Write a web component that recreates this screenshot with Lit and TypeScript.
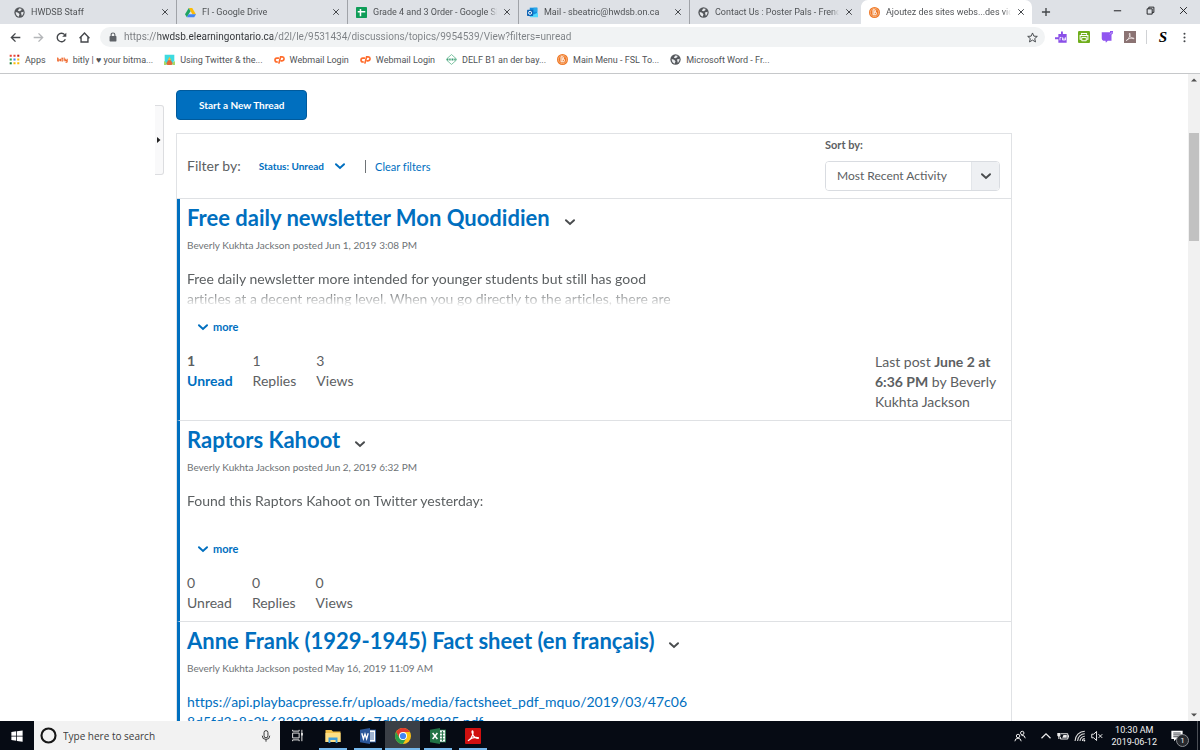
import { LitElement, html, css, svg, nothing, TemplateResult } from 'lit';
import { customElement, property } from 'lit/decorators.js';
import { classMap } from 'lit/directives/class-map.js';

interface Tab {
  icon: string;
  title: string;
  active?: boolean;
}

interface Thread {
  title: string;
  meta: string;
  text?: string;
  link?: string;
  unread: number;
  replies: number;
  views: number;
  lastPost?: { date: string; author: string };
}

const TABS: Tab[] = [
  { icon: 'globe', title: 'HWDSB Staff' },
  { icon: 'drive', title: 'FI - Google Drive' },
  { icon: 'sheets', title: 'Grade 4 and 3 Order - Google Sheets' },
  { icon: 'outlook', title: 'Mail - sbeatric@hwdsb.on.ca' },
  { icon: 'globe', title: 'Contact Us : Poster Pals - French' },
  { icon: 'fsl', title: 'Ajoutez des sites webs...des vidéos', active: true },
];

const BOOKMARKS = [
  { icon: 'apps', title: 'Apps' },
  { icon: 'bitly', title: 'bitly | ♥ your bitma...' },
  { icon: 'hive', title: 'Using Twitter & the...' },
  { icon: 'cpanel', title: 'Webmail Login' },
  { icon: 'cpanel', title: 'Webmail Login' },
  { icon: 'delf', title: 'DELF B1 an der bay...' },
  { icon: 'fsl', title: 'Main Menu - FSL To...' },
  { icon: 'globe', title: 'Microsoft Word - Fr...' },
];

const EXTENSIONS = [
  { icon: 'readwrite', title: 'Read&Write' },
  { icon: 'printer', title: 'Print' },
  { icon: 'note', title: 'Notes' },
  { icon: 'pdf', title: 'PDF' },
];

const TASKS = [
  { icon: 'folder', title: 'File Explorer' },
  { icon: 'word', title: 'Word' },
  { icon: 'chrome', title: 'Chrome', active: true },
  { icon: 'excel', title: 'Excel' },
  { icon: 'acrobat', title: 'Acrobat' },
];

const THREADS: Thread[] = [
  {
    title: 'Free daily newsletter Mon Quodidien',
    meta: 'Beverly Kukhta Jackson posted Jun 1, 2019 3:08 PM',
    text: 'Free daily newsletter more intended for younger students but still has good articles at a decent reading level. When you go directly to the articles, there are',
    unread: 1,
    replies: 1,
    views: 3,
    lastPost: { date: 'June 2 at 6:36 PM', author: 'Beverly Kukhta Jackson' },
  },
  {
    title: 'Raptors Kahoot',
    meta: 'Beverly Kukhta Jackson posted Jun 2, 2019 6:32 PM',
    text: 'Found this Raptors Kahoot on Twitter yesterday:',
    unread: 0,
    replies: 0,
    views: 0,
  },
  {
    title: 'Anne Frank (1929-1945) Fact sheet (en français)',
    meta: 'Beverly Kukhta Jackson posted May 16, 2019 11:09 AM',
    link: 'https://api.playbacpresse.fr/uploads/media/factsheet_pdf_mquo/2019/03/47c068d5fd3a8c2b6322391681b6a7d060f18335.pdf',
    unread: 0,
    replies: 0,
    views: 0,
  },
];

/** Icon bodies, all drawn on a 16x16 grid. */
const ICONS: Record<string, TemplateResult> = {
  globe: svg`
    <circle cx="8" cy="8" r="7.5" fill="#55585c" />
    <path d="M2.5 7.2 L6 8.2 L8 10.5 L6.8 14 Q2.4 12.6 2.5 7.2Z M7.5 2 L11 2.4 L10.6 4.6 L8 6.2 L5.6 5.6Z M10 8 L14 7 Q14 11 11.4 13 L10.8 10.4Z" fill="#e8eaed" />
  `,
  drive: svg`
    <path d="M5.5 1.5 H10.5 L16 11 H11Z" fill="#fbbc05" />
    <path d="M5.5 1.5 L8 6 L2.7 15 L0 10.6Z" fill="#1fa463" />
    <path d="M5.4 10.6 H16 L13.4 15 H2.7Z" fill="#4285f4" />
  `,
  sheets: svg`
    <rect x="0" y="0" width="16" height="16" rx="1" fill="#0f9d58" />
    <path d="M6.5 3 V13.5 M2.5 7 H13.5" fill="none" stroke="#fff" stroke-width="2.2" />
  `,
  outlook: svg`
    <path d="M4 1 H15 V14 H4Z" fill="#1490df" />
    <path d="M9.5 1 H15 V7 H9.5Z" fill="#28a8ea" />
    <path d="M5 8 L10 11 L16 8 V15 H5Z" fill="#50d9ff" />
    <rect x="0" y="4" width="9" height="9" rx="1" fill="#0f64b5" />
    <circle cx="4.5" cy="8.5" r="2.2" fill="none" stroke="#fff" stroke-width="1.4" />
  `,
  fsl: svg`
    <circle cx="8" cy="8" r="8" fill="#ee7623" />
    <circle cx="8" cy="8" r="6" fill="none" stroke="#ffd9b8" stroke-width="0.8" />
    <path d="M5.8 4 H8.6 Q10.6 4.4 9.4 7 Q12 8 10.2 11.4 H5.8Z M7.6 5 V11 M7.6 7.6 H10" fill="none" stroke="#fff" stroke-width="1.3" />
  `,
  apps: svg`
    <path d="M1 1h3v3h-3z M6.5 1h3v3h-3z" fill="#ea4335" />
    <path d="M12 1h3v3h-3z" fill="#c5221f" />
    <path d="M1 6.5h3v3h-3z" fill="#34a853" />
    <path d="M6.5 6.5h3v3h-3z" fill="#4285f4" />
    <path d="M12 6.5h3v3h-3z M12 12h3v3h-3z M6.5 12h3v3h-3z" fill="#fbbc05" />
    <path d="M1 12h3v3h-3z" fill="#188038" />
  `,
  bitly: svg`
    <path d="M1 5 V10 Q3.4 10.4 3.4 8.4 Q3.2 7 1 7.6 M5.2 7 V10.4 M7.4 5 V10.2 H8.6 M6.4 7 H8.8 M10.4 5 V10.4 M12 7 Q12 10 13 10 Q14.8 10 14.8 7 V11 Q14.6 12.4 12.4 12" fill="none" stroke="#ee6123" stroke-width="1.5" />
  `,
  hive: svg`
    <path d="M1 1 H15 V9 L12 15 H3 L1 11Z" fill="#3edbe0" />
    <path d="M8 4 L10.5 9 H5.5Z" fill="#f3b63a" />
    <path d="M3 14 L6 9 H10 L13 14 L11 16 H5Z" fill="#e06a3b" />
    <path d="M0 10 L3 12 L4 16 H0Z M16 10 L13 12 L12 16 H16Z" fill="#a6d96a" />
  `,
  cpanel: svg`
    <path d="M7.2 6 H4.2 Q1.4 6.2 1.4 9 Q1.6 11.6 4.4 11.6 H5.6" fill="none" stroke="#ff6c2c" stroke-width="2.4" />
    <path d="M7 14 L9.6 4.2 H12 Q14.8 4.4 14.6 7.2 Q14.2 10 11.2 10 H9.6" fill="none" stroke="#ff6c2c" stroke-width="2.4" />
  `,
  delf: svg`
    <path d="M8 0.8 L15 7 V9 L8 15.2 L1 9 V7Z" fill="#fff" stroke="#65b891" stroke-width="1.2" />
    <path d="M1.5 8 H14.5" stroke="#3c9d73" stroke-width="3" stroke-dasharray="1.6 0.8" />
  `,
  back: svg`<path d="M15 8 H2 M8 2 L2 8 L8 14" fill="none" stroke="currentColor" stroke-width="2" />`,
  forward: svg`<path d="M1 8 H14 M8 2 L14 8 L8 14" fill="none" stroke="currentColor" stroke-width="2" />`,
  reload: svg`
    <path d="M13.6 10.6 A6.2 6.2 0 1 1 12.6 3.8" fill="none" stroke="currentColor" stroke-width="2" />
    <path d="M15 1 V7 H9Z" fill="currentColor" />
  `,
  home: svg`<path d="M0.8 9 L8 1.6 L15.2 9 M3 7.5 V14.5 H13 V7.5" fill="none" stroke="currentColor" stroke-width="2" />`,
  lock: svg`
    <rect x="2.5" y="6.5" width="11" height="8.5" rx="1" fill="#5f6368" />
    <path d="M5 7 V4.4 Q5 1.6 8 1.6 Q11 1.6 11 4.4 V7" fill="none" stroke="#5f6368" stroke-width="1.8" />
  `,
  star: svg`<path d="M8 1.4 L10 6 L15 6.4 L11.2 9.6 L12.4 14.4 L8 11.8 L3.6 14.4 L4.8 9.6 L1 6.4 L6 6Z" fill="none" stroke="#44474b" stroke-width="1.4" />`,
  readwrite: svg`
    <path d="M4.5 4 H8 V0.5 H10.5 V4 H15.5 V15.5 H4.5 V11 H0 V8.4 H4.5Z" fill="#8a4fe8" />
    <path d="M6.6 12.4 V8.6 H8.6 M10 8.4 V12 H14 V8.4 M12 9 V12" fill="none" stroke="#fff" stroke-width="1.1" />
  `,
  printer: svg`
    <rect x="0" y="0" width="16" height="16" rx="1.5" fill="#6fae1c" />
    <path d="M4.6 5 V3.4 H11.4 V5 M4.4 11 H2.8 V6 H13.2 V11 H11.6" fill="none" stroke="#fff" stroke-width="1.4" />
    <path d="M5 8.6 H11 V13 H5Z" fill="none" stroke="#fff" stroke-width="1.3" />
  `,
  note: svg`
    <path d="M1 1.6 H12 V0 H16 V3 L14 5 V13 H9 L6.5 15.6 L6 13 H3 Q1 12 1 10Z" fill="#9056f0" />
    <path d="M12 4.5 L15 1.5" stroke="#e7dafc" stroke-width="0.9" />
  `,
  pdf: svg`
    <rect x="0" y="0" width="16" height="16" fill="#8b7373" />
    <path d="M3 12.8 Q6.4 11 7.8 6.4 Q8.6 3 7.4 2.8 Q6.2 3.4 8 7 Q9.6 10.4 13.2 10.4 Q14.2 9.4 11 9.2 Q6.6 9.4 3 12.8Z" fill="none" stroke="#f3eaea" stroke-width="1.1" />
  `,
  menu: svg`
    <circle cx="8" cy="2.6" r="1.5" fill="#44474b" />
    <circle cx="8" cy="8" r="1.5" fill="#44474b" />
    <circle cx="8" cy="13.4" r="1.5" fill="#44474b" />
  `,
  close: svg`<path d="M2.5 2.5 L13.5 13.5 M13.5 2.5 L2.5 13.5" stroke="currentColor" stroke-width="2" />`,
  closeThin: svg`<path d="M2 2 L14 14 M14 2 L2 14" stroke="currentColor" stroke-width="1.7" />`,
  plus: svg`<path d="M8 1.5 V14.5 M1.5 8 H14.5" stroke="currentColor" stroke-width="2.2" />`,
  minimize: svg`<path d="M1.5 8.5 H14.5" stroke="currentColor" stroke-width="1.8" />`,
  restore: svg`<path d="M2 5 H11 V14.4 H2Z M5 5 V2 H14 V11.4 H11" fill="none" stroke="currentColor" stroke-width="1.7" />`,
  chevron: svg`<path d="M2.6 5.6 L8 10.6 L13.4 5.6" fill="none" stroke="currentColor" stroke-width="2.6" stroke-linecap="round" />`,
  triUp: svg`<path d="M2 11 L8 5 L14 11Z" fill="currentColor" />`,
  triDown: svg`<path d="M2 5 L8 11 L14 5Z" fill="currentColor" />`,
  triRight: svg`<path d="M4 2 L11 8 L4 14Z" fill="currentColor" />`,
  windows: svg`<path d="M0.5 2.6 L7 1.7 V7.5 H0.5Z M8 1.5 L15.5 0.5 V7.5 H8Z M0.5 8.5 H7 V14.3 L0.5 13.4Z M8 8.5 H15.5 V15.5 L8 14.5Z" fill="#fff" />`,
  cortana: svg`<circle cx="8" cy="8" r="6.6" fill="none" stroke="#161616" stroke-width="2" />`,
  mic: svg`
    <rect x="5.4" y="0.8" width="5.2" height="9.6" rx="2.6" fill="none" stroke="#333" stroke-width="1.3" />
    <path d="M3 7.6 Q3 12.6 8 12.6 Q13 12.6 13 7.6 M8 12.6 V15.6" fill="none" stroke="#333" stroke-width="1.3" />
  `,
  taskview: svg`
    <path d="M2 5 H10 V11 H2Z M2 1 V2.6 H10 V1 M2 15 V13.4 H10 V15" fill="none" stroke="#e6e6e6" stroke-width="1.2" />
    <path d="M13.4 1 V15" stroke="#e6e6e6" stroke-width="1.2" />
    <path d="M12.4 5 H14.6 V8 H12.4Z" fill="#e6e6e6" />
  `,
  folder: svg`
    <path d="M0.5 2 H6.5 L8 3.6 H15.5 V14 H0.5Z" fill="#f2c14b" />
    <path d="M0.5 5 H15.5 V14 H0.5Z" fill="#fddf85" />
    <path d="M3.5 15 V9.4 H12.5 V15 H10.6 V12 H5.4 V15Z" fill="#3f9edb" />
  `,
  word: svg`
    <rect x="8" y="2" width="7.6" height="12" fill="#fff" stroke="#2b579a" stroke-width="0.8" />
    <path d="M9.5 5 H14 M9.5 7 H14 M9.5 9 H14 M9.5 11 H14" stroke="#2b579a" stroke-width="0.9" />
    <path d="M0 1.8 L10 0 V16 L0 14.2Z" fill="#2b579a" />
    <path d="M1.8 5.2 L3.4 10.8 L5 6 L6.6 10.8 L8.2 5.2" fill="none" stroke="#fff" stroke-width="1.3" />
  `,
  chrome: svg`
    <circle cx="8" cy="8" r="8" fill="#fbc116" />
    <path d="M8 4 H15 A8 8 0 0 0 1.1 4 L4.5 10 L8 8Z" fill="#e33b2e" />
    <path d="M1.1 4 A8 8 0 0 0 8 16 L11.4 10 L8 8 L4.5 10Z" fill="#2a9e4b" />
    <circle cx="8" cy="8" r="4" fill="#fff" />
    <circle cx="8" cy="8" r="3.1" fill="#4285f4" />
  `,
  excel: svg`
    <rect x="8" y="2" width="7.6" height="12" fill="#fff" stroke="#217346" stroke-width="0.8" />
    <path d="M10 5 H14.5 M10 8 H14.5 M10 11 H14.5 M12.4 3 V13" stroke="#217346" stroke-width="1" />
    <path d="M0 1.8 L10 0 V16 L0 14.2Z" fill="#217346" />
    <path d="M2.6 5 L7.4 11 M7.4 5 L2.6 11" stroke="#fff" stroke-width="1.5" />
  `,
  acrobat: svg`
    <rect x="0" y="0" width="16" height="16" rx="1" fill="#d0100f" />
    <path d="M3 12.8 Q6.4 11 7.8 6.4 Q8.6 3 7.4 2.8 Q6.2 3.4 8 7 Q9.6 10.4 13.2 10.4 Q14.2 9.4 11 9.2 Q6.6 9.4 3 12.8Z" fill="none" stroke="#fff" stroke-width="1.1" />
  `,
  people: svg`
    <circle cx="11" cy="4" r="2.3" fill="none" stroke="#eee" stroke-width="1.3" />
    <circle cx="5.4" cy="8" r="2.3" fill="none" stroke="#eee" stroke-width="1.3" />
    <path d="M1.2 15 Q1.4 11 5.4 11 Q9.2 11 9.6 15 M10 7.2 Q14.6 6.6 15 11" fill="none" stroke="#eee" stroke-width="1.3" />
  `,
  caretUp: svg`<path d="M2 11 L8 5 L14 11" fill="none" stroke="#eee" stroke-width="1.6" />`,
  battery: svg`
    <path d="M5 5 H14.4 V12 H4.6 V9" fill="none" stroke="#eee" stroke-width="1.3" />
    <path d="M8.6 6.6 H13 V10.4 H7Z M14.6 7 H16 V10 H14.6Z M0.4 4 H4.6 V7.6 L3.2 9 V12 H1.8 V9 L0.4 7.6Z" fill="#eee" />
  `,
  wifi: svg`
    <path d="M1.4 14.6 A13 13 0 0 1 14.4 1.6 M4.8 14.6 A9.6 9.6 0 0 1 14.4 5 M8 14.6 A6.4 6.4 0 0 1 14.4 8.2 M11.2 14.6 A3.2 3.2 0 0 1 14.4 11.4" fill="none" stroke="#ddd" stroke-width="1.4" />
    <circle cx="13.8" cy="14" r="1.2" fill="#eee" />
  `,
  muted: svg`
    <path d="M1 5.6 H3.6 L7.4 2 V14 L3.6 10.4 H1Z M10 5.6 L15 10.6 M15 5.6 L10 10.6" fill="none" stroke="#eee" stroke-width="1.3" />
  `,
  action: svg`
    <path d="M0.5 1 H15.5 V12 H7 L4 15 V12 H0.5Z" fill="#fff" />
    <path d="M3 4 H13 M3 6.5 H13 M3 9 H10" stroke="#0a0f18" stroke-width="1" />
  `,
};

@customElement('ui-icon')
export class UiIcon extends LitElement {
  static styles = css`
    :host {
      display: inline-flex;
      flex: none;
      width: 12px;
      height: 12px;
    }

    svg {
      width: 100%;
      height: 100%;
      display: block;
    }
  `;

  @property() name = '';

  render() {
    return html`<svg viewBox="0 0 16 16" aria-hidden="true">${ICONS[this.name] ?? nothing}</svg>`;
  }
}

@customElement('browser-chrome')
export class BrowserChrome extends LitElement {
  static styles = css`
    :host {
      display: block;
      font: 9px/14px Roboto, 'Noto Sans', sans-serif;
      color: #505356;
      background: #fff;
      border-bottom: 1px solid #c6c8ca;
    }

    button {
      display: inline-flex;
      align-items: center;
      justify-content: center;
      padding: 0;
      border: 0;
      background: none;
      color: #44474b;
      font: inherit;
    }

    ui-icon {
      width: 11px;
      height: 11px;
    }

    .tabs {
      display: flex;
      height: 24px;
      padding-left: 6px;
      background: #dee1e6;
    }

    .tab {
      display: flex;
      align-items: center;
      flex: 0 1 171px;
      min-width: 0;
      gap: 6px;
      padding: 0 7px 0 8px;
      box-sizing: border-box;
      border-right: 1px solid #a0a3a8;
      background-clip: padding-box;
    }

    .tab.last {
      border-color: transparent;
    }

    .tab.active {
      background: #fff;
      border: 0;
      border-radius: 7px 7px 0 0;
    }

    .tab-title {
      flex: 1;
      overflow: hidden;
      white-space: nowrap;
      mask-image: linear-gradient(to right, #000 calc(100% - 8px), transparent);
    }

    .tab-close ui-icon {
      width: 8px;
      height: 8px;
    }

    .new-tab {
      width: 28px;
    }

    .new-tab ui-icon {
      width: 10px;
      height: 10px;
    }

    .window {
      display: flex;
      margin-left: auto;
      padding-bottom: 4px;
    }

    .window button {
      width: 33px;
      color: #202124;
    }

    .window ui-icon {
      width: 9px;
      height: 9px;
    }

    .toolbar {
      display: flex;
      align-items: center;
      padding: 3px 10px 3px 4px;
    }

    .nav {
      width: 23px;
      height: 20px;
    }

    .nav[disabled] {
      color: #b4b6b9;
    }

    .address {
      display: flex;
      align-items: center;
      flex: 1;
      min-width: 0;
      gap: 6px;
      margin: 0 10px 0 4px;
      padding: 0 7px 0 8px;
      height: 20px;
      border-radius: 10px;
      background: #f1f3f4;
    }

    .lock {
      width: 10px;
      height: 10px;
    }

    /* the host part of the address is darker than the rest */
    .url {
      flex: 1;
      min-width: 0;
      padding: 0;
      border: 0;
      outline: 0;
      font: 10px/16px Roboto, 'Noto Sans', sans-serif;
      color: transparent;
      background: linear-gradient(to right, #76797d 34px, #2f3235 34px 149px, #7c8084 149px);
      background-clip: text;
      -webkit-background-clip: text;
    }

    .extensions {
      display: flex;
      align-items: center;
      gap: 11px;
    }

    .extensions ui-icon {
      width: 12px;
      height: 12px;
    }

    .profile {
      margin: 0 12px 0 10px;
      padding-left: 12px;
      border-left: 1px solid #d0d2d5;
      font: italic bold 15px/14px 'Liberation Serif', serif;
      color: #000;
    }

    .bookmarks {
      display: flex;
      align-items: center;
      gap: 11px;
      height: 23px;
      padding: 0 9px 4px;
      box-sizing: border-box;
    }

    .bookmark {
      display: flex;
      align-items: center;
      gap: 5px;
      color: inherit;
      text-decoration: none;
      white-space: nowrap;
    }
  `;

  render() {
    return html`
      <nav class="tabs" aria-label="Tabs">
        ${TABS.map(
          (tab, i) => html`
            <div
              class=${classMap({ tab: true, active: !!tab.active, last: !!TABS[i + 1]?.active })}
            >
              <ui-icon name=${tab.icon}></ui-icon>
              <span class="tab-title">${tab.title}</span>
              <button class="tab-close" aria-label="Close tab">
                <ui-icon name="close"></ui-icon>
              </button>
            </div>
          `
        )}
        <button class="new-tab" aria-label="New tab"><ui-icon name="plus"></ui-icon></button>
        <div class="window">
          <button aria-label="Minimize"><ui-icon name="minimize"></ui-icon></button>
          <button aria-label="Restore"><ui-icon name="restore"></ui-icon></button>
          <button aria-label="Close"><ui-icon name="closeThin"></ui-icon></button>
        </div>
      </nav>
      <div class="toolbar">
        <button class="nav" aria-label="Back"><ui-icon name="back"></ui-icon></button>
        <button class="nav" aria-label="Forward" disabled>
          <ui-icon name="forward"></ui-icon>
        </button>
        <button class="nav" aria-label="Reload"><ui-icon name="reload"></ui-icon></button>
        <button class="nav" aria-label="Home"><ui-icon name="home"></ui-icon></button>
        <div class="address">
          <ui-icon class="lock" name="lock"></ui-icon>
          <input
            class="url"
            aria-label="Address"
            value="https://hwdsb.elearningontario.ca/d2l/le/9531434/discussions/topics/9954539/View?filters=unread"
          />
          <button aria-label="Bookmark this page"><ui-icon name="star"></ui-icon></button>
        </div>
        <div class="extensions">
          ${EXTENSIONS.map(
            (ext) => html`
              <button aria-label=${ext.title}><ui-icon name=${ext.icon}></ui-icon></button>
            `
          )}
        </div>
        <button class="profile" aria-label="Profile">S</button>
        <button aria-label="Menu"><ui-icon name="menu"></ui-icon></button>
      </div>
      <nav class="bookmarks" aria-label="Bookmarks">
        ${BOOKMARKS.map(
          (mark) => html`
            <a class="bookmark" href="#">
              <ui-icon name=${mark.icon}></ui-icon>
              <span>${mark.title}</span>
            </a>
          `
        )}
      </nav>
    `;
  }
}

@customElement('discussion-thread')
export class DiscussionThread extends LitElement {
  static styles = css`
    :host {
      display: block;
      padding: 4px 15px 8px 7px;
      border-left: 3px solid #006fbf;
      border-bottom: 1px solid #dfe1e4;
      font-size: 14px;
      line-height: 20px;
    }

    h2 {
      display: flex;
      align-items: center;
      gap: 14px;
      margin: 0;
      font-size: 22px;
      line-height: 30px;
      font-weight: 700;
    }

    a {
      color: #006fbf;
      text-decoration: none;
    }

    button {
      display: inline-flex;
      align-items: center;
      padding: 0;
      border: 0;
      background: none;
      font: inherit;
      color: #494c4e;
    }

    .actions {
      padding-top: 8px;
    }

    .meta {
      margin: 4px 0 16px;
      font-size: 10px;
      line-height: 16px;
      color: #6e7376;
    }

    .body {
      max-width: 500px;
      height: 40px;
      margin: 0;
      overflow: hidden;
      mask-image: linear-gradient(to bottom, #000 20px, transparent 38px);
    }

    .body.link {
      mask-image: none;
      word-break: break-all;
    }

    .more {
      gap: 4px;
      margin: 8px 0 14px 10px;
      font-size: 11px;
      font-weight: 700;
      line-height: 20px;
      color: #006fbf;
    }

    .footer {
      display: flex;
      justify-content: space-between;
      align-items: flex-start;
    }

    .stats {
      display: flex;
      gap: 20px;
      margin: 0;
    }

    .stats div {
      display: flex;
      flex-direction: column-reverse;
    }

    .stats dd {
      margin: 0;
    }

    .has-unread {
      font-weight: 700;
    }

    .has-unread dt {
      color: #006fbf;
    }

    .last-post {
      width: 121px;
      margin: 0;
      padding-top: 1px;
    }
  `;

  @property({ attribute: false }) thread!: Thread;

  render() {
    const { title, meta, text, link, unread, replies, views, lastPost } = this.thread;

    return html`
      <h2>
        <a href="#">${title}</a>
        <button class="actions" aria-label="Actions for ${title}">
          <ui-icon name="chevron"></ui-icon>
        </button>
      </h2>
      <p class="meta">${meta}</p>
      <p class=${classMap({ body: true, link: !!link })}>
        ${link ? html`<a href=${link}>${link}</a>` : text}
      </p>
      <button class="more"><ui-icon name="chevron"></ui-icon>more</button>
      <div class="footer">
        <dl class="stats">
          <div class=${classMap({ 'has-unread': unread > 0 })}>
            <dt>Unread</dt>
            <dd>${unread}</dd>
          </div>
          <div>
            <dt>Replies</dt>
            <dd>${replies}</dd>
          </div>
          <div>
            <dt>Views</dt>
            <dd>${views}</dd>
          </div>
        </dl>
        ${lastPost
          ? html`<p class="last-post">
              Last post <strong>${lastPost.date}</strong> by ${lastPost.author}
            </p>`
          : nothing}
      </div>
    `;
  }
}

@customElement('discussion-page')
export class DiscussionPage extends LitElement {
  static styles = css`
    :host {
      display: flex;
      min-height: 0;
      overflow: hidden;
      font-family: Lato, sans-serif;
      font-variant-ligatures: none;
      color: #5c6062;
      background: #fff;
    }

    .content {
      display: grid;
      grid-template-columns: 1fr minmax(0, 836px) 1fr;
      flex: 1;
      min-width: 0;
      align-items: start;
    }

    .handle {
      display: flex;
      align-items: center;
      justify-content: center;
      justify-self: end;
      width: 9px;
      height: 70px;
      margin: 31px 12px 0 0;
      padding: 0;
      border: 1px solid #dcdde0;
      border-left: 0;
      border-radius: 0 3px 3px 0;
      background: #f9f9fa;
      color: #222;
    }

    .handle ui-icon {
      width: 8px;
      height: 8px;
    }

    .main {
      padding-top: 16px;
    }

    .start {
      padding: 0 22px;
      border: 1px solid #005a9c;
      border-radius: 4px;
      background: #006fbf;
      color: #fff;
      font: 700 10px/28px Lato, sans-serif;
    }

    .panel {
      margin-top: 13px;
      border: 1px solid #e0e2e5;
      border-bottom: 0;
    }

    .bar {
      display: flex;
      align-items: center;
      justify-content: space-between;
      padding: 0 11px 0 10px;
      border-bottom: 1px solid #dfe1e4;
    }

    .filters {
      display: flex;
      align-items: center;
      font-size: 11px;
      line-height: 20px;
    }

    .filters-label {
      margin-right: 18px;
      font-size: 14px;
    }

    .status {
      display: inline-flex;
      align-items: center;
      gap: 10px;
      margin-right: 19px;
      padding: 0;
      border: 0;
      background: none;
      color: #006fbf;
      font: 700 10px/20px Lato, sans-serif;
    }

    .clear {
      padding-left: 9px;
      border-left: 1px solid #6e7376;
      line-height: 13px;
      color: #006fbf;
      text-decoration: none;
    }

    .sort {
      display: flex;
      flex-direction: column;
      gap: 8px;
      padding: 3px 0 7px;
      font-size: 11px;
      line-height: 16px;
    }

    .sort label {
      font-weight: 700;
    }

    .select {
      display: grid;
      grid-template-columns: 1fr 28px;
      width: 175px;
      box-sizing: border-box;
      border: 1px solid #d9dce1;
      border-radius: 4px;
      overflow: hidden;
    }

    .select select {
      grid-area: 1 / 1 / 2 / 3;
      appearance: none;
      padding: 0 28px 0 11px;
      border: 0;
      background: #fff;
      color: #5c6062;
      font: 12px/28px Lato, sans-serif;
      height: 28px;
    }

    .select-arrow {
      grid-area: 1 / 2;
      display: flex;
      align-items: center;
      justify-content: center;
      border-left: 1px solid #e3e6ea;
      background: #eef0f3;
      color: #494c4e;
      pointer-events: none;
    }

    .scrollbar {
      display: flex;
      flex-direction: column;
      width: 12px;
      background: #f1f1f1;
    }

    .scrollbar button {
      display: flex;
      align-items: center;
      justify-content: center;
      height: 12px;
      padding: 0;
      border: 0;
      background: none;
      color: #505050;
    }

    .scrollbar ui-icon {
      width: 8px;
      height: 8px;
    }

    .track {
      display: grid;
      flex: 1;
      padding: 0 1px;
    }

    .thumb {
      background: #c1c1c1;
    }
  `;

  /** Scroll offset and visible share of the document, in permille. */
  @property({ type: Number }) offset = 75;
  @property({ type: Number }) share = 173;

  render() {
    const rest = 1000 - this.offset - this.share;

    return html`
      <div class="content">
        <button class="handle" aria-label="Show side panel">
          <ui-icon name="triRight"></ui-icon>
        </button>
        <main class="main">
          <button class="start">Start a New Thread</button>
          <section class="panel">
            <div class="bar">
              <div class="filters">
                <span class="filters-label">Filter by:</span>
                <button class="status">Status: Unread <ui-icon name="chevron"></ui-icon></button>
                <a class="clear" href="#">Clear filters</a>
              </div>
              <div class="sort">
                <label for="sort">Sort by:</label>
                <div class="select">
                  <select id="sort">
                    <option>Most Recent Activity</option>
                    <option>Oldest Activity</option>
                  </select>
                  <span class="select-arrow"><ui-icon name="chevron"></ui-icon></span>
                </div>
              </div>
            </div>
            ${THREADS.map(
              (thread) => html`<discussion-thread .thread=${thread}></discussion-thread>`
            )}
          </section>
        </main>
      </div>
      <div class="scrollbar">
        <button aria-label="Scroll up"><ui-icon name="triUp"></ui-icon></button>
        <div
          class="track"
          style="grid-template-rows: ${this.offset}fr ${this.share}fr ${rest}fr"
        >
          <span></span>
          <span class="thumb"></span>
        </div>
        <button aria-label="Scroll down"><ui-icon name="triDown"></ui-icon></button>
      </div>
    `;
  }
}

@customElement('task-bar')
export class TaskBar extends LitElement {
  static styles = css`
    :host {
      display: flex;
      height: 29px;
      background: #060b14;
      color: #f2f2f2;
      font-family: Roboto, 'Noto Sans', sans-serif;
    }

    button {
      display: flex;
      align-items: center;
      justify-content: center;
      padding: 0;
      border: 0;
      background: none;
      color: inherit;
      font: inherit;
    }

    .start {
      width: 34px;
    }

    .search {
      display: flex;
      align-items: center;
      flex: 0 1 246px;
      gap: 6px;
      padding: 0 8px 0 6px;
      box-sizing: border-box;
      background: #f2f2f2;
    }

    .cortana {
      width: 17px;
      height: 17px;
    }

    .search input {
      flex: 1;
      min-width: 0;
      padding: 0;
      border: 0;
      outline: 0;
      background: none;
      font: 10px/16px 'Open Sans', 'Noto Sans', sans-serif;
      color: #222;
    }

    .search input::placeholder {
      color: #3c3c3c;
      opacity: 1;
    }

    .tasks {
      display: flex;
    }

    .task {
      width: 35px;
    }

    .task ui-icon {
      width: 16px;
      height: 16px;
    }

    .task .taskview {
      width: 13px;
      height: 13px;
    }

    .task.open {
      background: linear-gradient(#76b9ed, #76b9ed) center bottom / 28px 2px no-repeat;
    }

    .task.active {
      background: linear-gradient(#76b9ed, #76b9ed) center bottom / 35px 2px no-repeat #3a3f46;
    }

    .tray {
      display: flex;
      align-items: center;
      gap: 5px;
      margin-left: auto;
      padding-right: 2px;
    }

    .people {
      margin-right: 9px;
    }

    .tray time {
      margin-left: 4px;
      font-size: 9px;
      line-height: 12px;
      text-align: center;
    }

    .action {
      position: relative;
      width: 30px;
      height: 29px;
    }

    .badge {
      position: absolute;
      right: 3px;
      bottom: 3px;
      width: 11px;
      border: 1px solid #8a8d92;
      border-radius: 50%;
      background: #26292e;
      font-size: 8px;
      line-height: 11px;
    }

    .edge {
      width: 1px;
      height: 29px;
      background: #4a4e55;
    }
  `;

  render() {
    return html`
      <button class="start" aria-label="Start"><ui-icon name="windows"></ui-icon></button>
      <div class="search">
        <ui-icon class="cortana" name="cortana"></ui-icon>
        <input type="text" placeholder="Type here to search" aria-label="Type here to search" />
        <ui-icon name="mic"></ui-icon>
      </div>
      <div class="tasks">
        <button class="task" aria-label="Task view">
          <ui-icon class="taskview" name="taskview"></ui-icon>
        </button>
        ${TASKS.map(
          (task) => html`
            <button
              class=${classMap({ task: true, open: true, active: !!task.active })}
              aria-label=${task.title}
            >
              <ui-icon name=${task.icon}></ui-icon>
            </button>
          `
        )}
      </div>
      <div class="tray">
        <button class="people" aria-label="People"><ui-icon name="people"></ui-icon></button>
        <button aria-label="Hidden icons"><ui-icon name="caretUp"></ui-icon></button>
        <button aria-label="Battery"><ui-icon name="battery"></ui-icon></button>
        <button aria-label="Network"><ui-icon name="wifi"></ui-icon></button>
        <button aria-label="Volume"><ui-icon name="muted"></ui-icon></button>
        <time datetime="2019-06-12T10:30">10:30 AM<br />2019-06-12</time>
        <button class="action" aria-label="Notifications">
          <ui-icon name="action"></ui-icon>
          <span class="badge">1</span>
        </button>
        <span class="edge"></span>
      </div>
    `;
  }
}

@customElement('app-root')
export class AppRoot extends LitElement {
  static styles = css`
    :host {
      display: grid;
      grid-template-rows: auto minmax(0, 1fr) auto;
      height: 100vh;
      overflow: hidden;
    }
  `;

  render() {
    return html`
      <browser-chrome></browser-chrome>
      <discussion-page></discussion-page>
      <task-bar></task-bar>
    `;
  }
}
